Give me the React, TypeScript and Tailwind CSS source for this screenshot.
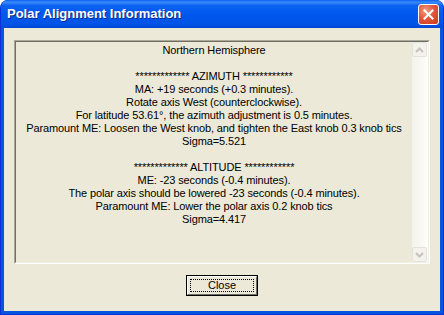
const lines: string[] = [
  "Northern Hemisphere",
  "",
  "************* AZIMUTH ************",
  "MA: +19 seconds (+0.3 minutes).",
  "Rotate axis West (counterclockwise).",
  "For latitude 53.61°, the azimuth adjustment is 0.5 minutes.",
  "Paramount ME: Loosen the West knob, and tighten the East knob 0.3 knob tics",
  "Sigma=5.521",
  "",
  "************* ALTITUDE ************",
  "ME: -23 seconds (-0.4 minutes).",
  "The polar axis should be lowered -23 seconds (-0.4 minutes).",
  "Paramount ME: Lower the polar axis 0.2 knob tics",
  "Sigma=4.417",
];

function Chevron({ up }: { up?: boolean }) {
  return (
    <svg width="9" height="6" viewBox="0 0 9 6" aria-hidden>
      <path
        d={up ? "M1 5 L4.5 1.5 L8 5" : "M1 1 L4.5 4.5 L8 1"}
        fill="none"
        stroke="#c3c3bb"
        strokeWidth="2"
      />
    </svg>
  );
}

function ScrollButton({ up }: { up?: boolean }) {
  return (
    <div className="flex h-[15px] w-[15px] items-center justify-center rounded-[2px] border border-[#e4e3da] bg-[#f3f2ec]">
      <Chevron up={up} />
    </div>
  );
}

export default function App() {
  return (
    <div className="h-[315px] w-[444px] bg-white">
      <div className="flex h-full w-full flex-col rounded-t-[8px] border-x border-b border-[#0831d9] bg-[#0855dd]">
        {/* title bar */}
        <div className="flex h-[28px] items-center justify-between rounded-t-[7px] bg-[linear-gradient(to_bottom,#0a5ef0_0%,#3b8cfb_8%,#0b62f2_20%,#0058ee_50%,#0054e6_85%,#0047d4_100%)] pl-[6px] pr-[4px]">
          <span className="font-['Liberation_Sans',sans-serif] text-[13px] font-bold text-white [text-shadow:1px_1px_0_#0a2a8a]">
            Polar Alignment Information
          </span>
          <div className="flex h-[21px] w-[21px] items-center justify-center rounded-[3px] border border-white bg-[radial-gradient(circle_at_35%_30%,#f0a085_0%,#e2573a_45%,#c9381c_100%)]">
            <svg width="11" height="11" viewBox="0 0 11 11" aria-hidden>
              <path d="M1.5 1.5 L9.5 9.5 M9.5 1.5 L1.5 9.5" stroke="white" strokeWidth="2" strokeLinecap="square" />
            </svg>
          </div>
        </div>

        {/* client area */}
        <div className="mx-[3px] mb-[3px] flex flex-1 flex-col items-center bg-[#ece9d8] px-[10px] pt-[12px]">
          <div className="w-full border border-b-white border-l-[#aca899] border-r-white border-t-[#aca899]">
            <div className="flex h-[222px] border border-b-[#f1efe2] border-l-[#716f64] border-r-[#f1efe2] border-t-[#716f64]">
              <div className="flex-1 pt-[2px] text-center font-['Liberation_Sans',sans-serif] text-[11px] leading-[13px] tracking-[-0.12px] text-black">
                {lines.map((l, i) => (
                  <div key={i} className="h-[13px] whitespace-nowrap">
                    {l}
                  </div>
                ))}
              </div>
              <div className="flex w-[16px] flex-col justify-between bg-[linear-gradient(to_right,#f3f2ec,#fdfdfa)]">
                <ScrollButton up />
                <ScrollButton />
              </div>
            </div>
          </div>

          <div className="mt-[11px] h-[21px] w-[72px] border border-black">
            <div className="h-full w-full border border-b-[#716f64] border-l-white border-r-[#716f64] border-t-white p-[2px]">
              <div className="flex h-full w-full items-center justify-center border border-dotted border-black font-['Liberation_Sans',sans-serif] text-[11px] text-black">
                Close
              </div>
            </div>
          </div>
        </div>
      </div>
    </div>
  );
}
